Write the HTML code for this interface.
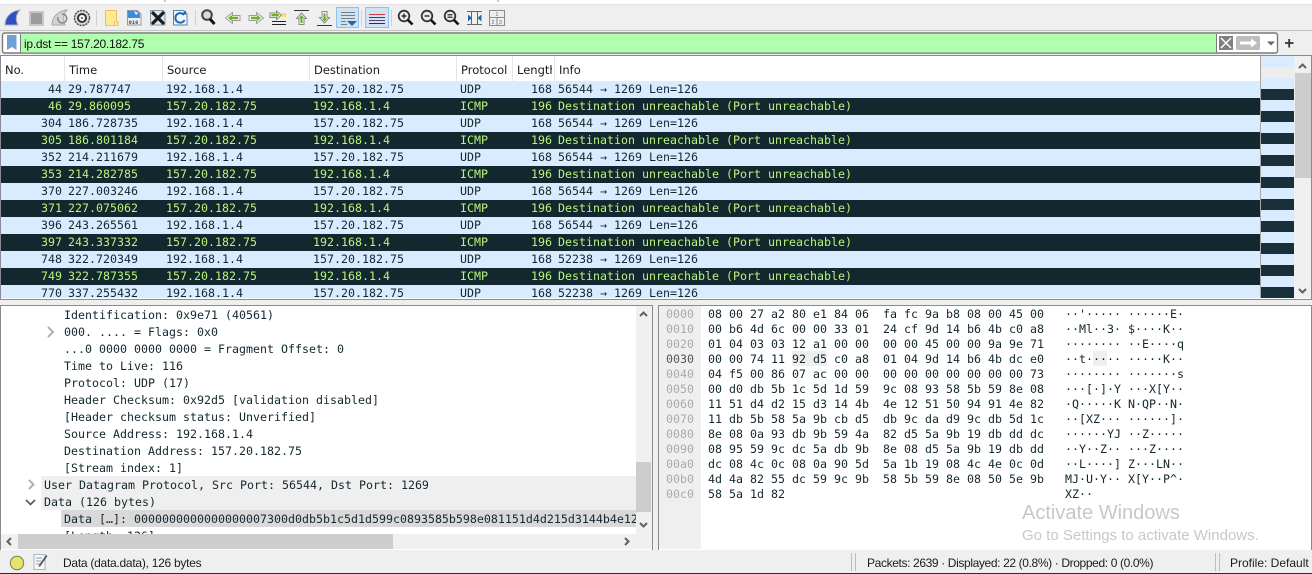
<!DOCTYPE html>
<html><head><meta charset="utf-8">
<style>
html,body{margin:0;padding:0;width:1312px;height:574px;overflow:hidden;background:#efefef}
.a{position:absolute}
.m{font-family:"DejaVu Sans Mono","Liberation Mono",monospace;font-size:11.63px;white-space:pre;color:#12272e}
.r{position:absolute;left:1px;width:1259px;height:17px;line-height:17px;background:#d9ecff;overflow:hidden}
.r.d{background:#12272e}
.r.d span{color:#b9f57a}
.r span{position:absolute;top:0;color:#12272e}
.n{left:0;width:61px;text-align:right}
.t{left:67px}.s{left:165px}.x{left:312px}.p{left:459px}
.l{left:515px;width:36px;text-align:right}.i{left:557px}
.h{position:absolute;top:56px;height:25px;line-height:29px;font-family:"DejaVu Sans",sans-serif;font-size:11.5px;color:#1a1a1a;overflow:hidden;white-space:nowrap}
.v{position:absolute;top:56px;height:25px;width:1px;background:#e6e6e6}
.dr{position:absolute;height:17px;line-height:17px;margin-top:1px}
.hx{position:absolute;left:708px;line-height:15px;height:15px;margin-top:1px}
.of{position:absolute;left:666px;line-height:15px;height:15px;color:#aaa;margin-top:1px}
.as{position:absolute;left:1065px;line-height:15px;height:15px;margin-top:1px}
.st{position:absolute;top:556px;line-height:15px;font-family:"Liberation Sans",sans-serif;font-size:12px;color:#1c1c1c;white-space:nowrap}
</style></head><body>
<div class="a" style="left:0;top:0;width:1312px;height:4px;background:#fff"></div>
<div class="a" style="left:0;top:4px;width:1312px;height:1px;background:#e2e2e2"></div>
<div class="a" style="left:0;top:30px;width:1312px;height:1px;background:#c4c4c4"></div>

<svg class="a" style="left:0;top:0" width="1312" height="56" viewBox="0 0 1312 56">
<path d="M165 0v2M498 0v2" stroke="#999"/>
<!-- fin -->
<path d="M5 25C5 17 11 11 20 10C16 14 15 20 18 25Z" fill="#2c4fc4" stroke="#a9adb8"/>
<!-- stop -->
<rect x="30" y="12" width="13" height="13" fill="#9c9c9c" stroke="#c6c6c6" stroke-width="2"/>
<!-- restart -->
<path d="M52 25C52 17 58 11 67 10C63 14 63 20 65 25Z" fill="#d4d4d4" stroke="#a8a8a8"/>
<path d="M62 14a4.500 4.500 0 1 1-4 3" fill="none" stroke="#888" stroke-width="1.500"/>
<!-- options -->
<circle cx="82" cy="18" r="7.500" fill="#ddd" stroke="#555" stroke-width="1.500" stroke-dasharray="2.200 0.800"/>
<circle cx="82" cy="18" r="4" fill="#fff" stroke="#333" stroke-width="2"/>
<circle cx="82" cy="18" r="1.200" fill="#777"/>
<path d="M96.500 10v16M195.500 10v16M361.500 10v16M391.500 10v16" stroke="#d0d0d0"/>
<!-- folder -->
<path d="M105.500 10.500h11v11h1.500v4h-12.500z" fill="#ffe793" stroke="#e6c262"/>
<path d="M114.500 21.500v4" stroke="#e6c262"/>
<!-- save -->
<path d="M127.500 10.500h10l3.500 3.500v11h-13.500z" fill="#eef3f6" stroke="#8a9aa8"/>
<path d="M128 11h9l3 3v4h-12z" fill="#3b8fd8"/>
<path d="M134 11l2 4 2-2z" fill="#fff"/>
<text x="128.500" y="24" font-family="Liberation Mono,monospace" font-size="5.500" font-weight="bold" fill="#444">010</text>
<!-- close -->
<path d="M150.500 10.500h13l1.500 2v12.500h-14.500z" fill="#dbe7f0" stroke="#8a9aa8"/>
<path d="M152 12L164 24M164 12L152 24" stroke="#1c1c1c" stroke-width="3.200"/>
<!-- reload -->
<path d="M173.500 10.500h10l3.500 3.500v11h-13.500z" fill="#eef5fb" stroke="#4f86b8"/>
<path d="M184 15a4.800 4.800 0 1 0 .5 5" fill="none" stroke="#2566b4" stroke-width="2"/>
<path d="M181 14.500h5v-4z" fill="#2566b4"/>
<!-- find -->
<circle cx="207" cy="15" r="4.800" fill="#dcdcdc" stroke="#444" stroke-width="2"/>
<path d="M210 19l4.500 5" stroke="#111" stroke-width="3"/>
<!-- back / forward -->
<path d="M225.500 18l7-5.500v3h7.500v5h-7.500v3z" fill="#f4f4f4" stroke="#9c9c9c"/>
<path d="M228 18l4-3v1.800h6v2.400h-6v1.800z" fill="#6db31c"/>
<path d="M263.500 18l-7-5.500v3h-7.500v5h7.500v3z" fill="#f4f4f4" stroke="#9c9c9c"/>
<path d="M261 18l-4-3v1.800h-6v2.400h6v1.800z" fill="#6db31c"/>
<!-- goto -->
<path d="M281.500 15l-5-4v2h-6.500v4.500h6.500v2z" fill="#f4f4f4" stroke="#8a8a8a"/>
<path d="M279.500 15l-3-2.200v1.200h-5v2.200h5v1.200z" fill="#6db31c"/>
<rect x="282" y="13" width="4" height="4" fill="#ffe34f"/>
<path d="M272 21.500h14M272 24.500h14" stroke="#222"/>
<!-- top -->
<path d="M294 10.500h15" stroke="#333"/>
<path d="M301.500 13l5 5.500h-2.500v6h-5v-6h-2.500z" fill="#f4f4f4" stroke="#8a8a8a"/>
<path d="M301.500 15l2.500 3h-1.500v5h-2v-5h-1.500z" fill="#5fae18"/>
<!-- bottom -->
<path d="M317 25.500h15" stroke="#333"/>
<path d="M324.500 23l5-5.500h-2.500v-6h-5v6h-2.500z" fill="#f4f4f4" stroke="#8a8a8a"/>
<path d="M324.500 21.500l2.500-3h-1.500v-5h-2v5h-1.500z" fill="#5fae18"/>
<!-- autoscroll -->
<rect x="336.500" y="7.500" width="22" height="20" fill="#cde4f7" stroke="#8fc3ee"/>
<path d="M341 12.500h14M341 15.500h14M341 18.500h14M341 21.500h5M341 24.500h6" stroke="#7d7d7d"/>
<path d="M347 21h10l-5 5z" fill="#2364ad"/>
<!-- colorize -->
<rect x="365.500" y="7.500" width="23" height="20" fill="#cde4f7" stroke="#8fc3ee"/>
<path d="M369 14.500h16" stroke="#d63a3a"/>
<path d="M369 17.500h16" stroke="#444"/>
<path d="M369 20.500h16" stroke="#6a3a6a"/>
<path d="M369 23.500h16" stroke="#333"/>
<!-- zoom in/out/reset -->
<g fill="#ececec" stroke="#333" stroke-width="1.800">
<circle cx="404" cy="16" r="5.300"/><circle cx="427" cy="16" r="5.300"/><circle cx="450" cy="16" r="5.300"/></g>
<path d="M408 20l4.500 4.500M431 20l4.500 4.500M454 20l4.500 4.500" stroke="#111" stroke-width="2.600"/>
<path d="M401.500 16h5M404 13.500v5M424.500 16h5M447.500 14.800h5M447.500 17.200h5" stroke="#111" stroke-width="1.200"/>
<!-- resize columns -->
<path d="M467 11.500h15M467 24.500h15M471.500 11v14M477.500 11v14" stroke="#666"/>
<path d="M468 14.500l4 3.500-4 3.500zM481.500 14.500l-4 3.500 4 3.500z" fill="#2364ad"/>
<!-- layout -->
<rect x="489.500" y="10.500" width="15" height="15" fill="#eee" stroke="#8a8a8a"/>
<path d="M490 17.500h14M497 18v7" stroke="#8a8a8a"/>
<text x="495.500" y="16" font-family="Liberation Sans,sans-serif" font-size="5" fill="#666">1</text>
<text x="491.500" y="24" font-family="Liberation Sans,sans-serif" font-size="5" fill="#666">2</text>
<text x="499" y="24" font-family="Liberation Sans,sans-serif" font-size="5" fill="#666">3</text>
<!-- filter -->
<rect x="2.500" y="33" width="1275" height="20" rx="2" fill="#fff" stroke="#7a7a7a" stroke-width="1.400"/>
<rect x="21" y="34" width="1195" height="18.500" fill="#afffaf"/>
<path d="M20.500 34v19M1216.500 34v19" stroke="#7a7a7a"/>
<path d="M7 35h9.500v15l-4.700-3-4.800 3z" fill="#6f9fd4"/>
<rect x="1219" y="36" width="14" height="14" fill="#808080"/>
<path d="M1221 38l10 10M1231 38l-10 10" stroke="#fff" stroke-width="1.500"/>
<rect x="1236" y="36" width="24" height="14" rx="2" fill="#bdbdbd"/>
<path d="M1240 41.500h11v-3l6 4.500-6 4.500v-3h-11z" fill="#fff"/>
<path d="M1267 41.500h8l-4 4z" fill="#666"/>
<path d="M1285 43h8.500M1289.200 39v8.500" stroke="#333" stroke-width="1.800"/>
</svg>
<div class="a" style="left:24px;top:37px;line-height:15px;font-family:'Liberation Sans',sans-serif;font-size:12px;letter-spacing:-.26px;color:#111;white-space:nowrap">ip.dst == 157.20.182.75</div>

<!-- packet list -->
<div class="a" style="left:0;top:55px;width:1310px;height:243px;border:1px solid #8a8a94;background:#fff"></div>
<div class="v" style="left:64px"></div><div class="v" style="left:162px"></div><div class="v" style="left:309px"></div><div class="v" style="left:456px"></div><div class="v" style="left:512px"></div><div class="v" style="left:554px"></div>
<div class="h" style="left:5px">No.</div><div class="h" style="left:69px">Time</div><div class="h" style="left:167px">Source</div><div class="h" style="left:314px">Destination</div><div class="h" style="left:461px">Protocol</div><div class="h" style="left:517px;width:35px">Length</div><div class="h" style="left:559px">Info</div>

<div class="a" style="left:0;top:81px;width:1260px;height:217px;overflow:hidden">
<div class="r m" style="top:0"><span class="n">44</span><span class="t">29.787747</span><span class="s">192.168.1.4</span><span class="x">157.20.182.75</span><span class="p">UDP</span><span class="l">168</span><span class="i">56544 → 1269 Len=126</span></div>
<div class="r m d" style="top:17px"><span class="n">46</span><span class="t">29.860095</span><span class="s">157.20.182.75</span><span class="x">192.168.1.4</span><span class="p">ICMP</span><span class="l">196</span><span class="i">Destination unreachable (Port unreachable)</span></div>
<div class="r m" style="top:34px"><span class="n">304</span><span class="t">186.728735</span><span class="s">192.168.1.4</span><span class="x">157.20.182.75</span><span class="p">UDP</span><span class="l">168</span><span class="i">56544 → 1269 Len=126</span></div>
<div class="r m d" style="top:51px"><span class="n">305</span><span class="t">186.801184</span><span class="s">157.20.182.75</span><span class="x">192.168.1.4</span><span class="p">ICMP</span><span class="l">196</span><span class="i">Destination unreachable (Port unreachable)</span></div>
<div class="r m" style="top:68px"><span class="n">352</span><span class="t">214.211679</span><span class="s">192.168.1.4</span><span class="x">157.20.182.75</span><span class="p">UDP</span><span class="l">168</span><span class="i">56544 → 1269 Len=126</span></div>
<div class="r m d" style="top:85px"><span class="n">353</span><span class="t">214.282785</span><span class="s">157.20.182.75</span><span class="x">192.168.1.4</span><span class="p">ICMP</span><span class="l">196</span><span class="i">Destination unreachable (Port unreachable)</span></div>
<div class="r m" style="top:102px"><span class="n">370</span><span class="t">227.003246</span><span class="s">192.168.1.4</span><span class="x">157.20.182.75</span><span class="p">UDP</span><span class="l">168</span><span class="i">56544 → 1269 Len=126</span></div>
<div class="r m d" style="top:119px"><span class="n">371</span><span class="t">227.075062</span><span class="s">157.20.182.75</span><span class="x">192.168.1.4</span><span class="p">ICMP</span><span class="l">196</span><span class="i">Destination unreachable (Port unreachable)</span></div>
<div class="r m" style="top:136px"><span class="n">396</span><span class="t">243.265561</span><span class="s">192.168.1.4</span><span class="x">157.20.182.75</span><span class="p">UDP</span><span class="l">168</span><span class="i">56544 → 1269 Len=126</span></div>
<div class="r m d" style="top:153px"><span class="n">397</span><span class="t">243.337332</span><span class="s">157.20.182.75</span><span class="x">192.168.1.4</span><span class="p">ICMP</span><span class="l">196</span><span class="i">Destination unreachable (Port unreachable)</span></div>
<div class="r m" style="top:170px"><span class="n">748</span><span class="t">322.720349</span><span class="s">192.168.1.4</span><span class="x">157.20.182.75</span><span class="p">UDP</span><span class="l">168</span><span class="i">52238 → 1269 Len=126</span></div>
<div class="r m d" style="top:187px"><span class="n">749</span><span class="t">322.787355</span><span class="s">157.20.182.75</span><span class="x">192.168.1.4</span><span class="p">ICMP</span><span class="l">196</span><span class="i">Destination unreachable (Port unreachable)</span></div>
<div class="r m" style="top:204px"><span class="n">770</span><span class="t">337.255432</span><span class="s">192.168.1.4</span><span class="x">157.20.182.75</span><span class="p">UDP</span><span class="l">168</span><span class="i">52238 → 1269 Len=126</span></div>
</div>

<!-- minimap + scrollbar -->
<svg class="a" style="left:1260px;top:56px" width="52" height="243" viewBox="1260 56 52 243">
<rect x="1260" y="56" width="1" height="242" fill="#a8a8a8"/>
<rect x="1261" y="56" width="33" height="242" fill="#d9ecff"/>
<rect x="1261" y="67" width="33" height="11" fill="#ededed"/>
<g fill="#17303a"><rect x="1261" y="89" width="33" height="11"/><rect x="1261" y="111" width="33" height="11"/><rect x="1261" y="133" width="33" height="11"/><rect x="1261" y="155" width="33" height="11"/><rect x="1261" y="177" width="33" height="11"/><rect x="1261" y="199" width="33" height="11"/><rect x="1261" y="221" width="33" height="11"/><rect x="1261" y="243" width="33" height="11"/><rect x="1261" y="265" width="33" height="11"/><rect x="1261" y="287" width="33" height="11"/></g>
<rect x="1294" y="56" width="17" height="242" fill="#f0f0f0"/>
<rect x="1295" y="73" width="16" height="105" fill="#cdcdcd"/>
<path d="M1299 68l3.500-3.500 3.500 3.500M1299 289l3.500 3.500 3.500-3.500" fill="none" stroke="#606060" stroke-width="2"/>
</svg>

<!-- details -->
<div class="a" style="left:0;top:305px;width:651px;height:244px;border:1px solid #8a8a94;background:#fff"></div>
<div class="a" style="left:1px;top:306px;width:635px;height:228px;overflow:hidden" id="dt">
<div class="a" style="left:40px;top:170px;width:595px;height:34px;background:#efefef"></div>
<div class="a" style="left:60px;top:204px;width:575px;height:17px;background:#d9d9d9"></div>
<div class="dr m" style="left:63px;top:0">Identification: 0x9e71 (40561)</div>
<div class="dr m" style="left:63px;top:17px">000. .... = Flags: 0x0</div>
<div class="dr m" style="left:63px;top:34px">...0 0000 0000 0000 = Fragment Offset: 0</div>
<div class="dr m" style="left:63px;top:51px">Time to Live: 116</div>
<div class="dr m" style="left:63px;top:68px">Protocol: UDP (17)</div>
<div class="dr m" style="left:63px;top:85px">Header Checksum: 0x92d5 [validation disabled]</div>
<div class="dr m" style="left:63px;top:102px">[Header checksum status: Unverified]</div>
<div class="dr m" style="left:63px;top:119px">Source Address: 192.168.1.4</div>
<div class="dr m" style="left:63px;top:136px">Destination Address: 157.20.182.75</div>
<div class="dr m" style="left:63px;top:153px">[Stream index: 1]</div>
<div class="dr m" style="left:43px;top:170px">User Datagram Protocol, Src Port: 56544, Dst Port: 1269</div>
<div class="dr m" style="left:43px;top:187px">Data (126 bytes)</div>
<div class="dr m" style="left:63px;top:204px">Data […]: 0000000000000000007300d0db5b1c5d1d599c0893585b598e081151d4d215d3144b4e12</div>
<div class="dr m" style="left:63px;top:221px">[Length: 126]</div>
</div>
<svg class="a" style="left:0;top:306px" width="653" height="244" viewBox="0 306 653 244">
<path d="M48 327l5 5-5 5M29 480l4.500 4.500-4.500 4.500" fill="none" stroke="#b0b0b0" stroke-width="2"/>
<path d="M26 500l4.500 4.500 4.500-4.500" fill="none" stroke="#555" stroke-width="1.600"/>
<rect x="636" y="306" width="16" height="228" fill="#f0f0f0"/>
<rect x="636" y="462" width="15" height="50" fill="#cdcdcd"/>
<path d="M640 316l3.500-3.500 3.500 3.500M640 523l3.500 3.500 3.500-3.500" fill="none" stroke="#606060" stroke-width="2"/>
<rect x="1" y="534" width="651" height="15" fill="#f0f0f0"/>
<rect x="18" y="534" width="375" height="15" fill="#cdcdcd"/>
<path d="M11 538l-3.500 3.500 3.500 3.500M625 538l3.500 3.500-3.500 3.500" fill="none" stroke="#606060" stroke-width="2"/>
</svg>

<!-- hex -->
<div class="a" style="left:658px;top:305px;width:652px;height:244px;border:1px solid #8a8a94;background:#fff"></div>
<div class="a" style="left:659px;top:306px;width:42px;height:243px;background:#efefef"></div>
<div class="a" style="left:792px;top:351px;width:35px;height:15px;background:#efefef"></div>
<div class="a" style="left:1093px;top:351px;width:14px;height:15px;background:#efefef"></div>
<div class="m">
<div class="of" style="top:306px">0000</div><div class="hx" style="top:306px">08 00 27 a2 80 e1 84 06  fa fc 9a b8 08 00 45 00</div><div class="as" style="top:306px">··'····· ······E·</div>
<div class="of" style="top:321px">0010</div><div class="hx" style="top:321px">00 b6 4d 6c 00 00 33 01  24 cf 9d 14 b6 4b c0 a8</div><div class="as" style="top:321px">··Ml··3· $····K··</div>
<div class="of" style="top:336px">0020</div><div class="hx" style="top:336px">01 04 03 03 12 a1 00 00  00 00 45 00 00 9a 9e 71</div><div class="as" style="top:336px">········ ··E····q</div>
<div class="of" style="top:351px;color:#555">0030</div><div class="hx" style="top:351px">00 00 74 11 92 d5 c0 a8  01 04 9d 14 b6 4b dc e0</div><div class="as" style="top:351px">··t····· ·····K··</div>
<div class="of" style="top:366px">0040</div><div class="hx" style="top:366px">04 f5 00 86 07 ac 00 00  00 00 00 00 00 00 00 73</div><div class="as" style="top:366px">········ ·······s</div>
<div class="of" style="top:381px">0050</div><div class="hx" style="top:381px">00 d0 db 5b 1c 5d 1d 59  9c 08 93 58 5b 59 8e 08</div><div class="as" style="top:381px">···[·]·Y ···X[Y··</div>
<div class="of" style="top:396px">0060</div><div class="hx" style="top:396px">11 51 d4 d2 15 d3 14 4b  4e 12 51 50 94 91 4e 82</div><div class="as" style="top:396px">·Q·····K N·QP··N·</div>
<div class="of" style="top:411px">0070</div><div class="hx" style="top:411px">11 db 5b 58 5a 9b cb d5  db 9c da d9 9c db 5d 1c</div><div class="as" style="top:411px">··[XZ··· ······]·</div>
<div class="of" style="top:426px">0080</div><div class="hx" style="top:426px">8e 08 0a 93 db 9b 59 4a  82 d5 5a 9b 19 db dd dc</div><div class="as" style="top:426px">······YJ ··Z·····</div>
<div class="of" style="top:441px">0090</div><div class="hx" style="top:441px">08 95 59 9c dc 5a db 9b  8e 08 d5 5a 9b 19 db dd</div><div class="as" style="top:441px">··Y··Z·· ···Z····</div>
<div class="of" style="top:456px">00a0</div><div class="hx" style="top:456px">dc 08 4c 0c 08 0a 90 5d  5a 1b 19 08 4c 4e 0c 0d</div><div class="as" style="top:456px">··L····] Z···LN··</div>
<div class="of" style="top:471px">00b0</div><div class="hx" style="top:471px">4d 4a 82 55 dc 59 9c 9b  58 5b 59 8e 08 50 5e 9b</div><div class="as" style="top:471px">MJ·U·Y·· X[Y··P^·</div>
<div class="of" style="top:486px">00c0</div><div class="hx" style="top:486px">58 5a 1d 82</div><div class="as" style="top:486px">XZ··</div>
</div>
<div class="a" style="left:1022px;top:501px;line-height:24px;font-family:'Liberation Sans',sans-serif;font-size:20px;color:#c8c8c8;white-space:nowrap">Activate Windows</div>
<div class="a" style="left:1022px;top:527px;line-height:18px;font-family:'Liberation Sans',sans-serif;font-size:15px;color:#c8c8c8;white-space:nowrap">Go to Settings to activate Windows.</div>

<!-- status -->
<div class="a" style="left:0;top:550px;width:1312px;height:23px;background:#efefef"></div>
<div class="a" style="left:0;top:573px;width:1312px;height:1px;background:#4b1a2e"></div>
<svg class="a" style="left:0;top:550px" width="1312" height="23" viewBox="0 550 1312 23">
<circle cx="17" cy="563" r="6.700" fill="#e6e36f" stroke="#7d7d50"/>
<path d="M34 554.500h11v15h-11z" fill="#f8f8f8" stroke="#a8b4c0"/>
<path d="M36 558h6M36 561h5M36 564h4" stroke="#8aa0b8"/>
<path d="M39 565l7-10 1.500 1-7 10-2 1z" fill="#555"/>
<path d="M851.500 553v18M855.500 553v18M1215.500 553v18M1219.500 553v18" stroke="#bdbdbd"/>
</svg>
<div class="st" style="left:63px;letter-spacing:-.26px">Data (data.data), 126 bytes</div>
<div class="st" style="left:867px;letter-spacing:-.37px">Packets: 2639 · Displayed: 22 (0.8%) · Dropped: 0 (0.0%)</div>
<div class="st" style="left:1230px">Profile: Default</div>
</body></html>
